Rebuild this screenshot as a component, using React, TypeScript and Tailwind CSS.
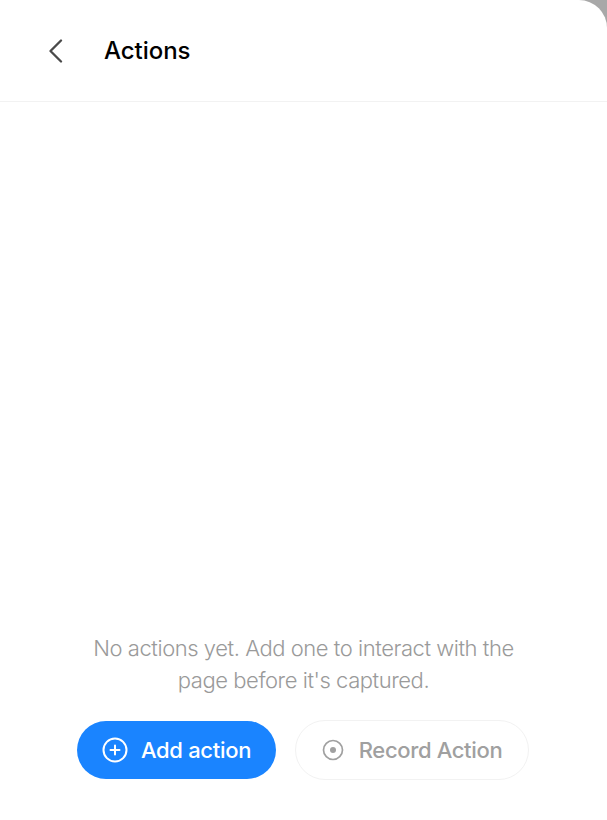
const App = () => {
  return (
    <div className="h-[820px] w-[607px] bg-[#a8a8a8] overflow-hidden" style={{ fontFamily: 'Inter, "Liberation Sans", sans-serif' }}>
      <div className="flex h-full flex-col rounded-tr-[28px] bg-white">
        <header className="flex h-[102px] items-center border-b border-[#f2f2f2] pl-[44px]">
          <button className="flex h-[24px] w-[24px] items-center justify-center text-[#4a4a4a]">
            <svg width="24" height="24" viewBox="0 0 24 24" fill="none" stroke="currentColor" strokeWidth="2.3" strokeLinecap="round" strokeLinejoin="round">
              <path d="M17 1.5 6.5 12 17 22.5" />
            </svg>
          </button>
          <h1 className="ml-[36px] text-[24px] font-medium tracking-[-0.05px] text-black">Actions</h1>
        </header>
        <main className="flex flex-1 flex-col items-center justify-end pb-[39px]">
          <p className="w-[450px] text-center text-[22px] font-light leading-[32px] tracking-[-0.45px] text-[#9a9a9a]">
            No actions yet. Add one to interact with the page before it's captured.
          </p>
          <div className="mt-[25px] flex gap-[19px] pr-[1px]">
            <button className="flex h-[58px] w-[199px] items-center justify-center gap-[13px] rounded-full bg-[#1a84ff] text-[22px] font-medium tracking-[-0.3px] text-white">
              <svg width="26" height="26" viewBox="0 0 26 26" fill="none" stroke="currentColor" strokeWidth="2" strokeLinecap="round">
                <circle cx="13" cy="13" r="11.5" />
                <path d="M13 8.5v9M8.5 13h9" />
              </svg>
              Add action
            </button>
            <button className="flex h-[60px] w-[234px] -translate-y-[1px] items-center justify-center gap-[15px] rounded-full border border-[#f2f2f2] bg-white text-[22px] font-medium tracking-[-0.35px] text-[#a0a0a0]">
              <svg width="22" height="22" viewBox="0 0 22 22" fill="none">
                <circle cx="11" cy="11" r="9.5" stroke="#a0a0a0" strokeWidth="1.7" />
                <circle cx="11" cy="11" r="3" fill="#a0a0a0" />
              </svg>
              Record Action
            </button>
          </div>
        </main>
      </div>
    </div>
  );
};

export default App;
